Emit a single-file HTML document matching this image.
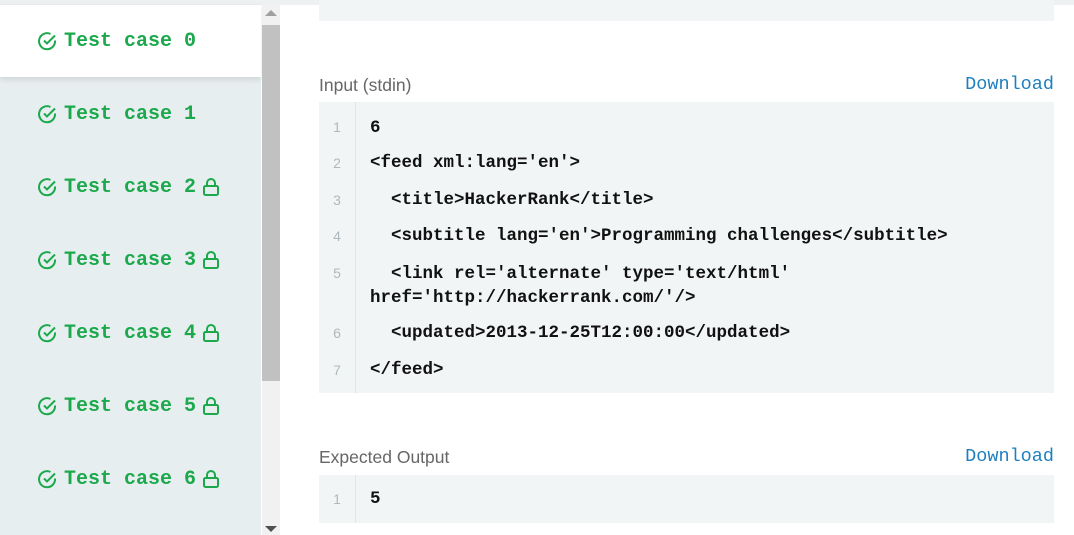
<html><head><style>
body{margin:0;width:1074px;height:535px;overflow:hidden;background:#fff;font-family:"Liberation Sans",sans-serif;position:relative}
.side{position:absolute;left:0;top:0;width:261px;height:535px;background:#e7eef0}
.top{position:absolute;left:0;top:0;width:1074px;height:5px;background:#eef1f2}
.item{position:absolute;left:0;width:261px;height:72px;display:flex;align-items:center;padding-left:38px;box-sizing:border-box;color:#1ba94c;font:bold 20px "Liberation Mono",monospace}
.item.a{background:#fff;box-shadow:0 2px 6px rgba(0,0,0,.12)}
.item svg{margin-right:6px}
.sb{position:absolute;left:262px;top:5px;width:18px;height:530px;background:#f1f1f1}
.th{position:absolute;left:262px;top:25px;width:18px;height:356px;background:#c1c1c1}
.lbl{position:absolute;left:319px;font-size:17.5px;color:#666}
.dl{position:absolute;right:20px;font:18.5px "Liberation Mono",monospace;color:#1f7fbf}
.box{position:absolute;left:319px;width:735px;background:#f2f5f6}
.gut{position:absolute;left:0;top:0;bottom:0;width:36px;border-right:1px solid #e0e5e7}
.ln{position:absolute;left:0;width:36px;text-align:center;color:#b0b8bc;font-size:14px}
.cd{position:absolute;left:51px;font:bold 17.5px "Liberation Mono",monospace;color:#111;white-space:pre}
</style></head><body>
<div class="side"></div><div class="top"></div>
<div class="item a" style="top:5px"><svg width="20" height="20" viewBox="0 0 20 20" fill="none" stroke="#1ba94c" stroke-width="2"><path d="M17 9.5A8 8 0 1 1 12.5 3"/><path d="M6 9.5l3 3 8-8"/></svg>Test case 0</div>
<div class="item" style="top:78px"><svg width="20" height="20" viewBox="0 0 20 20" fill="none" stroke="#1ba94c" stroke-width="2"><path d="M17 9.5A8 8 0 1 1 12.5 3"/><path d="M6 9.5l3 3 8-8"/></svg>Test case 1</div>
<div class="item" style="top:151px"><svg width="20" height="20" viewBox="0 0 20 20" fill="none" stroke="#1ba94c" stroke-width="2"><path d="M17 9.5A8 8 0 1 1 12.5 3"/><path d="M6 9.5l3 3 8-8"/></svg>Test case 2<svg style="margin-left:6px" width="18" height="20" viewBox="0 0 18 20" fill="none" stroke="#1ba94c" stroke-width="2"><rect x="2" y="9" width="14" height="9" rx="1.5"/><path d="M5 9V6a4 4 0 0 1 8 0v3"/></svg></div>
<div class="item" style="top:224px"><svg width="20" height="20" viewBox="0 0 20 20" fill="none" stroke="#1ba94c" stroke-width="2"><path d="M17 9.5A8 8 0 1 1 12.5 3"/><path d="M6 9.5l3 3 8-8"/></svg>Test case 3<svg style="margin-left:6px" width="18" height="20" viewBox="0 0 18 20" fill="none" stroke="#1ba94c" stroke-width="2"><rect x="2" y="9" width="14" height="9" rx="1.5"/><path d="M5 9V6a4 4 0 0 1 8 0v3"/></svg></div>
<div class="item" style="top:297px"><svg width="20" height="20" viewBox="0 0 20 20" fill="none" stroke="#1ba94c" stroke-width="2"><path d="M17 9.5A8 8 0 1 1 12.5 3"/><path d="M6 9.5l3 3 8-8"/></svg>Test case 4<svg style="margin-left:6px" width="18" height="20" viewBox="0 0 18 20" fill="none" stroke="#1ba94c" stroke-width="2"><rect x="2" y="9" width="14" height="9" rx="1.5"/><path d="M5 9V6a4 4 0 0 1 8 0v3"/></svg></div>
<div class="item" style="top:370px"><svg width="20" height="20" viewBox="0 0 20 20" fill="none" stroke="#1ba94c" stroke-width="2"><path d="M17 9.5A8 8 0 1 1 12.5 3"/><path d="M6 9.5l3 3 8-8"/></svg>Test case 5<svg style="margin-left:6px" width="18" height="20" viewBox="0 0 18 20" fill="none" stroke="#1ba94c" stroke-width="2"><rect x="2" y="9" width="14" height="9" rx="1.5"/><path d="M5 9V6a4 4 0 0 1 8 0v3"/></svg></div>
<div class="item" style="top:443px"><svg width="20" height="20" viewBox="0 0 20 20" fill="none" stroke="#1ba94c" stroke-width="2"><path d="M17 9.5A8 8 0 1 1 12.5 3"/><path d="M6 9.5l3 3 8-8"/></svg>Test case 6<svg style="margin-left:6px" width="18" height="20" viewBox="0 0 18 20" fill="none" stroke="#1ba94c" stroke-width="2"><rect x="2" y="9" width="14" height="9" rx="1.5"/><path d="M5 9V6a4 4 0 0 1 8 0v3"/></svg></div>
<div class="sb"></div><div class="th"></div>
<div style="position:absolute;left:265px;top:10px;width:0;height:0;border:6px solid transparent;border-bottom:6px solid #a0a0a0;border-top:0"></div>
<div style="position:absolute;left:265px;top:526px;width:0;height:0;border:6px solid transparent;border-top:6px solid #505050;border-bottom:0"></div>
<div class="box" style="top:0;height:21px"></div>
<div class="lbl" style="top:75px">Input (stdin)</div><div class="dl" style="top:74px">Download</div>
<div class="box" style="top:102px;height:291px"><div class="gut"></div>
<div class="ln" style="top:17px">1</div><div class="cd" style="top:16px">6</div>
<div class="ln" style="top:53px">2</div><div class="cd" style="top:51px">&lt;feed xml:lang='en'&gt;</div>
<div class="ln" style="top:90px">3</div><div class="cd" style="top:88px">  &lt;title&gt;HackerRank&lt;/title&gt;</div>
<div class="ln" style="top:126px">4</div><div class="cd" style="top:124px">  &lt;subtitle lang='en'&gt;Programming challenges&lt;/subtitle&gt;</div>
<div class="ln" style="top:163px">5</div><div class="cd" style="top:160px;line-height:24px">  &lt;link rel='alternate' type='text/html'
href='http://hackerrank.com/'/&gt;</div>
<div class="ln" style="top:223px">6</div><div class="cd" style="top:221px">  &lt;updated&gt;2013-12-25T12:00:00&lt;/updated&gt;</div>
<div class="ln" style="top:260px">7</div><div class="cd" style="top:258px">&lt;/feed&gt;</div>
</div>
<div class="lbl" style="top:447px">Expected Output</div><div class="dl" style="top:446px">Download</div>
<div class="box" style="top:475px;height:48px"><div class="gut"></div>
<div class="ln" style="top:16px">1</div><div class="cd" style="top:14px">5</div></div>
</body></html>
